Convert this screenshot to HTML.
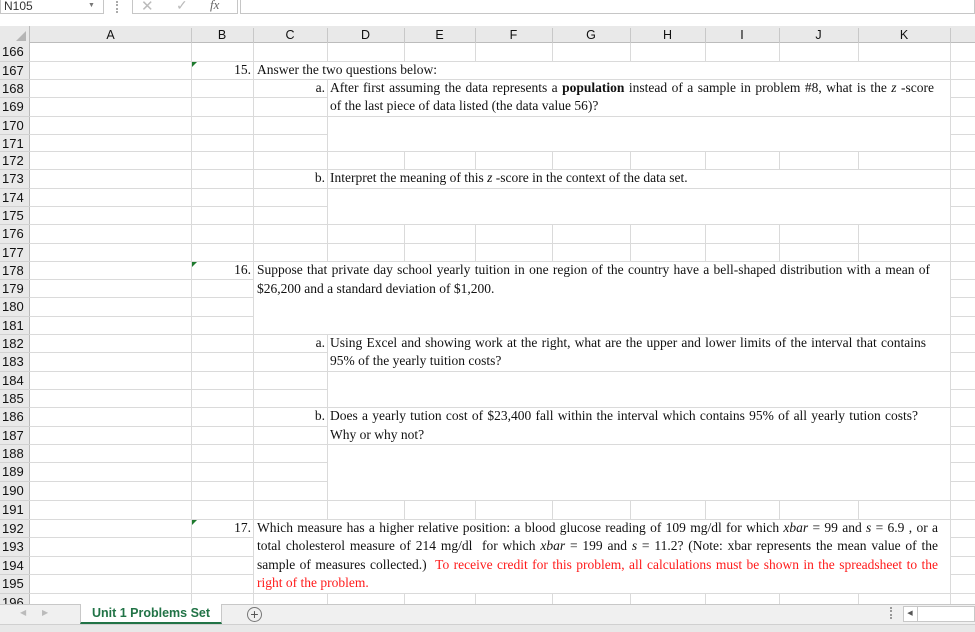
<!DOCTYPE html>
<html><head><meta charset="utf-8"><style>
*{margin:0;padding:0;box-sizing:border-box}
body{width:975px;height:632px;overflow:hidden;background:#fff;position:relative;font-family:"Liberation Sans",Arial,sans-serif}
.a{position:absolute}
.v{position:absolute;top:43px;height:561px;width:1px;background:#dadada}
.h{position:absolute;left:30px;width:945px;height:1px;background:#dadada}
.w{position:absolute;background:#fff}
.rh{position:absolute;left:0;width:30px;font-size:13px;color:#111;padding-left:2px;line-height:18px;border-top:1px solid #d2d2d2}
.ch{position:absolute;top:28px;height:15px;font-size:12.5px;text-align:center;line-height:15px;color:#111}
.t{position:absolute;font-family:"Liberation Serif","Times New Roman",serif;font-size:13.5px;line-height:16px;color:#111;white-space:nowrap}
.j{text-align:justify;text-align-last:justify;white-space:normal}
.red{color:#ff1a1a}
.tri{position:absolute;width:0;height:0;border-top:5px solid #1e7a2e;border-right:5px solid transparent}
</style></head><body>
<div class="a" style="left:0;top:0;width:975px;height:28px;background:#fff"></div>
<div class="a" style="left:0;top:0;width:104px;height:14px;border:1px solid #c6c6c6;border-top:none;font-size:12px;line-height:12px;padding-left:3px;color:#333">N105</div>
<div class="a" style="left:88px;top:2px;font-size:7px;color:#777">▼</div>
<div class="a" style="left:116px;top:1px;width:2px;height:12px;border-left:2px dotted #aaa"></div>
<div class="a" style="left:132px;top:-1px;width:106px;height:15px;border:1px solid #c6c6c6;border-top:none"></div>
<div class="a" style="left:141px;top:-3px;font-size:15px;color:#bbb">✕</div>
<div class="a" style="left:176px;top:-3px;font-size:14px;color:#bbb">✓</div>
<div class="a" style="left:210px;top:-3px;font-size:13px;color:#666;font-family:'Liberation Serif',serif;font-style:italic">fx</div>
<div class="a" style="left:240px;top:-1px;width:735px;height:15px;border:1px solid #c6c6c6;border-top:none"></div>
<div class="a" style="left:0;top:26px;width:975px;height:17px;background:#e9e9e9;border-bottom:1px solid #bcbcbc"></div>
<div class="a" style="left:0;top:26px;width:30px;height:578px;background:#e9e9e9;border-right:1px solid #bcbcbc"></div>
<div class="a" style="left:16px;top:31px;width:0;height:0;border-bottom:10px solid #b5b5b5;border-left:10px solid transparent"></div>
<div class="ch" style="left:30px;width:161px">A</div>
<div class="ch" style="left:191px;width:62px">B</div>
<div class="ch" style="left:253px;width:74px">C</div>
<div class="ch" style="left:327px;width:77px">D</div>
<div class="ch" style="left:404px;width:71px">E</div>
<div class="ch" style="left:475px;width:77px">F</div>
<div class="ch" style="left:552px;width:78px">G</div>
<div class="ch" style="left:630px;width:75px">H</div>
<div class="ch" style="left:705px;width:74px">I</div>
<div class="ch" style="left:779px;width:79px">J</div>
<div class="ch" style="left:858px;width:92px">K</div>
<div class="a" style="top:28px;left:191px;width:1px;height:15px;background:#c8c8c8"></div>
<div class="a" style="top:28px;left:253px;width:1px;height:15px;background:#c8c8c8"></div>
<div class="a" style="top:28px;left:327px;width:1px;height:15px;background:#c8c8c8"></div>
<div class="a" style="top:28px;left:404px;width:1px;height:15px;background:#c8c8c8"></div>
<div class="a" style="top:28px;left:475px;width:1px;height:15px;background:#c8c8c8"></div>
<div class="a" style="top:28px;left:552px;width:1px;height:15px;background:#c8c8c8"></div>
<div class="a" style="top:28px;left:630px;width:1px;height:15px;background:#c8c8c8"></div>
<div class="a" style="top:28px;left:705px;width:1px;height:15px;background:#c8c8c8"></div>
<div class="a" style="top:28px;left:779px;width:1px;height:15px;background:#c8c8c8"></div>
<div class="a" style="top:28px;left:858px;width:1px;height:15px;background:#c8c8c8"></div>
<div class="a" style="top:28px;left:950px;width:1px;height:15px;background:#c8c8c8"></div>
<div class="v" style="left:191px"></div><div class="v" style="left:253px"></div><div class="v" style="left:327px"></div>
<div class="v" style="left:404px"></div><div class="v" style="left:475px"></div><div class="v" style="left:552px"></div>
<div class="v" style="left:630px"></div><div class="v" style="left:705px"></div><div class="v" style="left:779px"></div>
<div class="v" style="left:858px"></div><div class="v" style="left:950px"></div>
<div class="h" style="top:61px"></div><div class="h" style="top:79px"></div><div class="h" style="top:97px"></div>
<div class="h" style="top:116px"></div><div class="h" style="top:134px"></div><div class="h" style="top:151px"></div>
<div class="h" style="top:169px"></div><div class="h" style="top:188px"></div><div class="h" style="top:206px"></div>
<div class="h" style="top:224px"></div><div class="h" style="top:243px"></div><div class="h" style="top:261px"></div>
<div class="h" style="top:279px"></div><div class="h" style="top:297px"></div><div class="h" style="top:316px"></div>
<div class="h" style="top:334px"></div><div class="h" style="top:352px"></div><div class="h" style="top:371px"></div>
<div class="h" style="top:389px"></div><div class="h" style="top:407px"></div><div class="h" style="top:426px"></div>
<div class="h" style="top:444px"></div><div class="h" style="top:462px"></div><div class="h" style="top:481px"></div>
<div class="h" style="top:500px"></div><div class="h" style="top:519px"></div><div class="h" style="top:537px"></div>
<div class="h" style="top:556px"></div><div class="h" style="top:574px"></div><div class="h" style="top:593px"></div>
<div class="w" style="left:254px;top:62px;width:696px;height:17px"></div>
<div class="w" style="left:328px;top:80px;width:622px;height:36px"></div>
<div class="w" style="left:328px;top:117px;width:622px;height:34px"></div>
<div class="w" style="left:328px;top:170px;width:622px;height:18px"></div>
<div class="w" style="left:328px;top:189px;width:622px;height:35px"></div>
<div class="w" style="left:254px;top:262px;width:696px;height:72px"></div>
<div class="w" style="left:328px;top:335px;width:622px;height:36px"></div>
<div class="w" style="left:328px;top:372px;width:622px;height:35px"></div>
<div class="w" style="left:328px;top:408px;width:622px;height:36px"></div>
<div class="w" style="left:328px;top:445px;width:622px;height:55px"></div>
<div class="w" style="left:254px;top:520px;width:696px;height:73px"></div>
<div class="rh" style="top:43px;border-top:none">166</div><div class="rh" style="top:61px">167</div><div class="rh" style="top:79px">168</div>
<div class="rh" style="top:97px">169</div><div class="rh" style="top:116px">170</div><div class="rh" style="top:134px">171</div>
<div class="rh" style="top:151px">172</div><div class="rh" style="top:169px">173</div><div class="rh" style="top:188px">174</div>
<div class="rh" style="top:206px">175</div><div class="rh" style="top:224px">176</div><div class="rh" style="top:243px">177</div>
<div class="rh" style="top:261px">178</div><div class="rh" style="top:279px">179</div><div class="rh" style="top:297px">180</div>
<div class="rh" style="top:316px">181</div><div class="rh" style="top:334px">182</div><div class="rh" style="top:352px">183</div>
<div class="rh" style="top:371px">184</div><div class="rh" style="top:389px">185</div><div class="rh" style="top:407px">186</div>
<div class="rh" style="top:426px">187</div><div class="rh" style="top:444px">188</div><div class="rh" style="top:462px">189</div>
<div class="rh" style="top:481px">190</div><div class="rh" style="top:500px">191</div><div class="rh" style="top:519px">192</div>
<div class="rh" style="top:537px">193</div><div class="rh" style="top:556px">194</div><div class="rh" style="top:574px">195</div>
<div class="rh" style="top:593px">196</div>
<div class="tri" style="left:192px;top:62px"></div>
<div class="tri" style="left:192px;top:262px"></div>
<div class="tri" style="left:192px;top:520px"></div>
<div class="t" style="left:192px;top:62px;width:59px;text-align:right">15.</div>
<div class="t" style="left:257px;top:62px">Answer the two questions below:</div>
<div class="t" style="left:254px;top:80px;width:71px;text-align:right">a.</div>
<div class="t j" style="left:330px;top:80px;width:604px">After first assuming the data represents a <b>population</b> instead of a sample in problem #8, what is the <i>z</i> -score</div>
<div class="t" style="left:330px;top:98px">of the last piece of data listed (the data value 56)?</div>
<div class="t" style="left:254px;top:170px;width:71px;text-align:right">b.</div>
<div class="t" style="left:330px;top:170px">Interpret the meaning of this <i>z</i> -score in the context of the data set.</div>
<div class="t" style="left:192px;top:262px;width:59px;text-align:right">16.</div>
<div class="t j" style="left:257px;top:262px;width:673px">Suppose that private day school yearly tuition in one region of the country have a bell-shaped distribution with a mean of</div>
<div class="t" style="left:257px;top:281px">$26,200 and a standard deviation of $1,200.</div>
<div class="t" style="left:254px;top:335px;width:71px;text-align:right">a.</div>
<div class="t j" style="left:330px;top:335px;width:596px">Using Excel and showing work at the right, what are the upper and lower limits of the interval that contains</div>
<div class="t" style="left:330px;top:353px">95% of the yearly tuition costs?</div>
<div class="t" style="left:254px;top:408px;width:71px;text-align:right">b.</div>
<div class="t j" style="left:330px;top:408px;width:588px">Does a yearly tution cost of $23,400 fall within the interval which contains 95% of all yearly tution costs?</div>
<div class="t" style="left:330px;top:427px">Why or why not?</div>
<div class="t" style="left:192px;top:520px;width:59px;text-align:right">17.</div>
<div class="t j" style="left:257px;top:520px;width:681px">Which measure has a higher relative position: a blood glucose reading of 109 mg/dl for which <i>xbar</i> = 99 and <i>s</i> = 6.9 , or a</div>
<div class="t j" style="left:257px;top:538px;width:681px">total cholesterol measure of 214 mg/dl&nbsp; for which <i>xbar</i> = 199 and <i>s</i> = 11.2? (Note: xbar represents the mean value of the</div>
<div class="t j" style="left:257px;top:557px;width:681px">sample of measures collected.)&nbsp; <span class="red">To receive credit for this problem, all calculations must be shown in the spreadsheet to the</span></div>
<div class="t red" style="left:257px;top:575px">right of the problem.</div>
<div class="a" style="left:0;top:604px;width:975px;height:20px;background:#f0f0f0;border-top:1px solid #c8c8c8"></div>
<div class="a" style="left:0;top:624px;width:975px;height:8px;background:#e8e8e8;border-top:1px solid #d0d0d0"></div>
<div class="a" style="left:20px;top:608px;font-size:8px;color:#bbb">◀</div>
<div class="a" style="left:42px;top:608px;font-size:8px;color:#bbb">▶</div>
<div class="a" style="left:80px;top:604px;width:142px;height:20px;background:#fff;border-left:1px solid #c8c8c8;border-right:1px solid #c8c8c8;border-bottom:2px solid #217346;color:#217346;font-weight:bold;font-size:12.5px;text-align:center;line-height:18px">Unit 1 Problems Set</div>
<div class="a" style="left:247px;top:607px;width:15px;height:15px;border:1px solid #777;border-radius:50%;text-align:center;font-size:14px;line-height:13px;color:#555">+</div>
<div class="a" style="left:890px;top:607px;width:2px;height:12px;border-left:2px dotted #999"></div>
<div class="a" style="left:903px;top:606px;width:72px;height:16px;background:#fff;border:1px solid #c8c8c8"></div>
<div class="a" style="left:903px;top:606px;width:15px;height:16px;border-right:1px solid #c8c8c8;font-size:7px;color:#555;text-align:center;line-height:15px">◀</div>
</body></html>
